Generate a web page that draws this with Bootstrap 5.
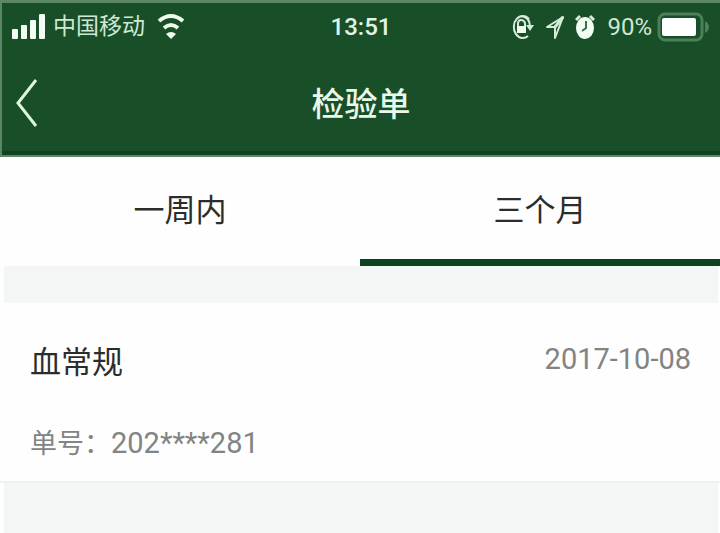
<!DOCTYPE html>
<html lang="zh-CN">
<head>
<meta charset="utf-8">
<meta name="viewport" content="width=device-width, initial-scale=1">
<title>检验单</title>
<link href="https://cdn.jsdelivr.net/npm/bootstrap@5.3.0/dist/css/bootstrap.min.css" rel="stylesheet">
<style>
  body { font-family: Roboto, "Noto Sans CJK SC", sans-serif; background: #fdfefd; color: #2b2d2c; }
  .app-head { background: #184f29; color: #e9f8ea; border-top: 3px solid #5b8766; border-left: 2px solid #5b8766; border-bottom: 2px solid #5b8766; box-shadow: inset 0 -4px 0 #0f431e; }
  .status-bar { height: 48px; padding: 0 10px 0 10px; font-size: 24px; line-height: 48px; color: #cfe8d3; }
  .status-bar svg { display: block; flex: none; }
  .status-side { flex: 1 1 0; }
  .carrier { font-size: 23px; }
  .clock { font-weight: 500; color: #e0f4e2; }
  .title-bar { height: 104px; padding: 0 12px; }
  .title-side { flex: 1 1 0; }
  .title-bar h1 { font-size: 33px; line-height: 52px; font-weight: 500; }
  .back-btn { color: #dff5e2; line-height: 0; }
  .range-tabs .nav-link { height: 109px; margin: 0; padding: 6px 0 0; border: 0; border-radius: 0; color: #2b2d2c; font-size: 31px; line-height: 96px; border-bottom: 7px solid transparent; background: none; }
  .range-tabs .nav-link.active { color: #2b2d2c; background: none; border-bottom-color: #0d421f; }
  .gap-band { background: #f4f5f5; margin: 0 2px 0 4px; }
  .gap-short { height: 37px; }
  .report { padding: 36px 29px 17px 30px; border-bottom: 2px solid #eff1f0; background: #fdfefd; }
  .report h2 { font-size: 31px; line-height: 48px; font-weight: 400; }
  .report time, .report-no { font-size: 29px; line-height: 40px; color: #828483; }
  .report-no { margin: 36px 0 0; }
  .report-label { font-size: 27px; }
</style>
<script src="https://cdn.jsdelivr.net/npm/bootstrap@5.3.0/dist/js/bootstrap.bundle.min.js" defer></script>
</head>
<body class="d-flex flex-column min-vh-100">
<header class="app-head">
  <div class="status-bar d-flex align-items-center">
    <div class="status-side d-flex align-items-center">
      <svg width="33" height="26" viewBox="0 0 33 26" fill="#f3fdf3" aria-hidden="true"><rect y="15" width="6" height="10" rx="1"/><rect x="9" y="11" width="6" height="14" rx="1"/><rect x="18" y="6" width="6" height="19" rx="1"/><rect x="27" y="0" width="6" height="25" rx="1"/></svg>
      <span class="carrier ms-2">中国移动</span>
      <svg class="ms-2" width="36" height="28" viewBox="0 0 36 28" fill="none" stroke="#effbef" stroke-width="4" aria-hidden="true"><path d="M6 8Q18-2 30 8M11 15Q18 9 25 15"/><path d="M18 26l-5-5q5-4 10 0z" fill="#effbef" stroke="none"/></svg>
    </div>
    <time class="clock" datetime="13:51">13:51</time>
    <div class="status-side d-flex align-items-center justify-content-end">
      <svg width="24" height="28" viewBox="0 0 24 28" fill="none" stroke="#d5ecd8" stroke-width="2" aria-hidden="true"><path d="M18 6A9 11 0 1 0 17 23M10 3q9 1 9 11"/><path d="M15 12h8l-4 6z" fill="#d5ecd8" stroke="none"/><rect x="6" y="13" width="9" height="7" fill="#effbef" stroke="none"/><path d="M7 13v-2q0-4 3-4t4 3v3"/></svg>
      <svg class="ms-2" width="24" height="28" viewBox="0 0 24 28" fill="none" stroke="#d5ecd8" stroke-width="2" stroke-linejoin="round" aria-hidden="true"><path d="M20 4L4 14h8v11z"/><path d="M20 4l-8 10" stroke-width="3"/></svg>
      <svg class="ms-2" width="20" height="28" viewBox="0 0 20 28" aria-hidden="true"><ellipse cx="10" cy="15" rx="9" ry="11" fill="#f3fdf3"/><path d="M1 7l4-4M19 7l-4-4" stroke="#d5ecd8" stroke-width="3"/><path d="M11 8v7l-4 3" fill="none" stroke="#39724a" stroke-width="2"/></svg>
      <span class="ms-2 ps-1">90%</span>
      <svg class="ms-1" width="54" height="30" viewBox="0 0 54 30" aria-hidden="true"><rect x="3" y="2" width="43" height="26" rx="6" fill="none" stroke="#4b8058" stroke-width="3"/><rect x="6" y="6" width="34" height="18" rx="2" fill="#fff"/><path d="M49 9q4 2 4 6t-4 6z" fill="#4b8058"/></svg>
    </div>
  </div>
  <nav class="title-bar d-flex align-items-center" aria-label="页面导航">
    <div class="title-side"><button type="button" class="btn border-0 p-0 back-btn" aria-label="返回"><svg width="26" height="52" viewBox="0 0 26 52" fill="none" stroke="currentColor" stroke-width="3"><path d="M22 3L4 26l18 23"/></svg></button></div>
    <h1 class="m-0 pt-1">检验单</h1>
    <div class="title-side"></div>
  </nav>
</header>
<main class="flex-grow-1 d-flex flex-column">
  <ul class="nav nav-fill range-tabs flex-nowrap" role="tablist">
    <li class="nav-item w-50" role="presentation"><button class="nav-link w-100" type="button" role="tab" aria-selected="false">一周内</button></li>
    <li class="nav-item w-50" role="presentation"><button class="nav-link w-100 active" type="button" role="tab" aria-selected="true">三个月</button></li>
  </ul>
  <div class="gap-band gap-short"></div>
  <article class="report">
    <div class="d-flex justify-content-between align-items-start">
      <h2 class="m-0">血常规</h2>
      <time datetime="2017-10-08">2017-10-08</time>
    </div>
    <p class="report-no"><span class="report-label">单号：</span>202****281</p>
  </article>
  <div class="gap-band flex-grow-1"></div>
</main>
</body>
</html>
